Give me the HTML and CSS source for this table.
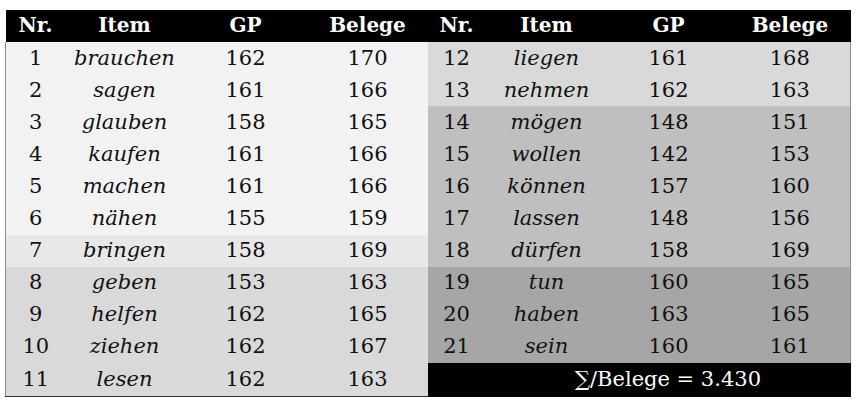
FILE: index.html
```html
<!DOCTYPE html>
<html lang="de">
<head>
<meta charset="utf-8">
<title>Verben</title>
<link rel="stylesheet" href="styles.css">
</head>
<body>
<div class="wrap">
<table class="tbl">
  <colgroup>
    <col class="c1"><col class="c2"><col class="c3"><col class="c4">
    <col class="c5"><col class="c6"><col class="c7"><col class="c8">
  </colgroup>
  <thead>
    <tr class="head">
      <th>Nr.</th><th>Item</th><th>GP</th><th>Belege</th>
      <th>Nr.</th><th>Item</th><th>GP</th><th>Belege</th>
    </tr>
  </thead>
  <tbody>
    <tr><td class="l a">1</td><td class="l a it">brauchen</td><td class="l a">162</td><td class="l a">170</td>
        <td class="r b">12</td><td class="r b it">liegen</td><td class="r b">161</td><td class="r b end">168</td></tr>
    <tr><td class="l a">2</td><td class="l a it">sagen</td><td class="l a">161</td><td class="l a">166</td>
        <td class="r b">13</td><td class="r b it">nehmen</td><td class="r b">162</td><td class="r b end">163</td></tr>
    <tr><td class="l a">3</td><td class="l a it">glauben</td><td class="l a">158</td><td class="l a">165</td>
        <td class="r c">14</td><td class="r c it">mögen</td><td class="r c">148</td><td class="r c end">151</td></tr>
    <tr><td class="l a">4</td><td class="l a it">kaufen</td><td class="l a">161</td><td class="l a">166</td>
        <td class="r c">15</td><td class="r c it">wollen</td><td class="r c">142</td><td class="r c end">153</td></tr>
    <tr><td class="l a">5</td><td class="l a it">machen</td><td class="l a">161</td><td class="l a">166</td>
        <td class="r c">16</td><td class="r c it">können</td><td class="r c">157</td><td class="r c end">160</td></tr>
    <tr><td class="l a">6</td><td class="l a it">nähen</td><td class="l a">155</td><td class="l a">159</td>
        <td class="r c">17</td><td class="r c it">lassen</td><td class="r c">148</td><td class="r c end">156</td></tr>
    <tr><td class="l a2">7</td><td class="l a2 it">bringen</td><td class="l a2">158</td><td class="l a2">169</td>
        <td class="r c">18</td><td class="r c it">dürfen</td><td class="r c">158</td><td class="r c end">169</td></tr>
    <tr><td class="l b">8</td><td class="l b it">geben</td><td class="l b">153</td><td class="l b">163</td>
        <td class="r d">19</td><td class="r d it">tun</td><td class="r d">160</td><td class="r d end">165</td></tr>
    <tr><td class="l b">9</td><td class="l b it">helfen</td><td class="l b">162</td><td class="l b">165</td>
        <td class="r d">20</td><td class="r d it">haben</td><td class="r d">163</td><td class="r d end">165</td></tr>
    <tr><td class="l b">10</td><td class="l b it">ziehen</td><td class="l b">162</td><td class="l b">167</td>
        <td class="r d">21</td><td class="r d it">sein</td><td class="r d">160</td><td class="r d end">161</td></tr>
    <tr class="last"><td class="l b">11</td><td class="l b it">lesen</td><td class="l b">162</td><td class="l b">163</td>
        <td class="sum"></td><td class="sum" colspan="3">∑/Belege = 3.430</td></tr>
  </tbody>
</table>
</div>
</body>
</html>
```

FILE: styles.css
```css
html, body {
  margin: 0;
  padding: 0;
  background: #ffffff;
}

.wrap {
  padding: 10px 0 0 5px;
}

.tbl {
  border-collapse: collapse;
  table-layout: fixed;
  width: 845px;
  font-size: 21px;
  color: #111111;
}

.c1 { width: 60px; }
.c2 { width: 118px; }
.c3 { width: 124px; }
.c4 { width: 120px; }
.c5 { width: 58px; }
.c6 { width: 122px; }
.c7 { width: 122px; }
.c8 { width: 121px; }

.tbl th,
.tbl td {
  font-family: "DejaVu Serif", serif;
  padding: 0;
  text-align: center;
  vertical-align: middle;
  white-space: nowrap;
}

.head th {
  height: 32px;
  background: #000000;
  color: #ffffff;
  font-size: 20px;
  font-weight: bold;
  line-height: 28px;
  padding-bottom: 3px;
  box-sizing: border-box;
}

.tbl td {
  height: 32.1px;
  line-height: 28px;
  padding-bottom: 1px;
  box-sizing: border-box;
}

.tbl tr.last td {
  height: 34px;
}

.it { font-style: italic; }

.a  { background: #f2f2f2; }
.a2 { background: #e8e8e8; }
.b  { background: #d9d9d9; }
.c  { background: #bfbfbf; }
.d  { background: #a6a6a6; }

.l:first-child {
  border-left: 1px solid #8c8c8c;
}

.end {
  border-right: 1px solid #8c8c8c;
}

.tbl tr.last td.l {
  border-bottom: 1px solid #333333;
}

.sum {
  background: #000000;
  color: #ffffff;
}
```
